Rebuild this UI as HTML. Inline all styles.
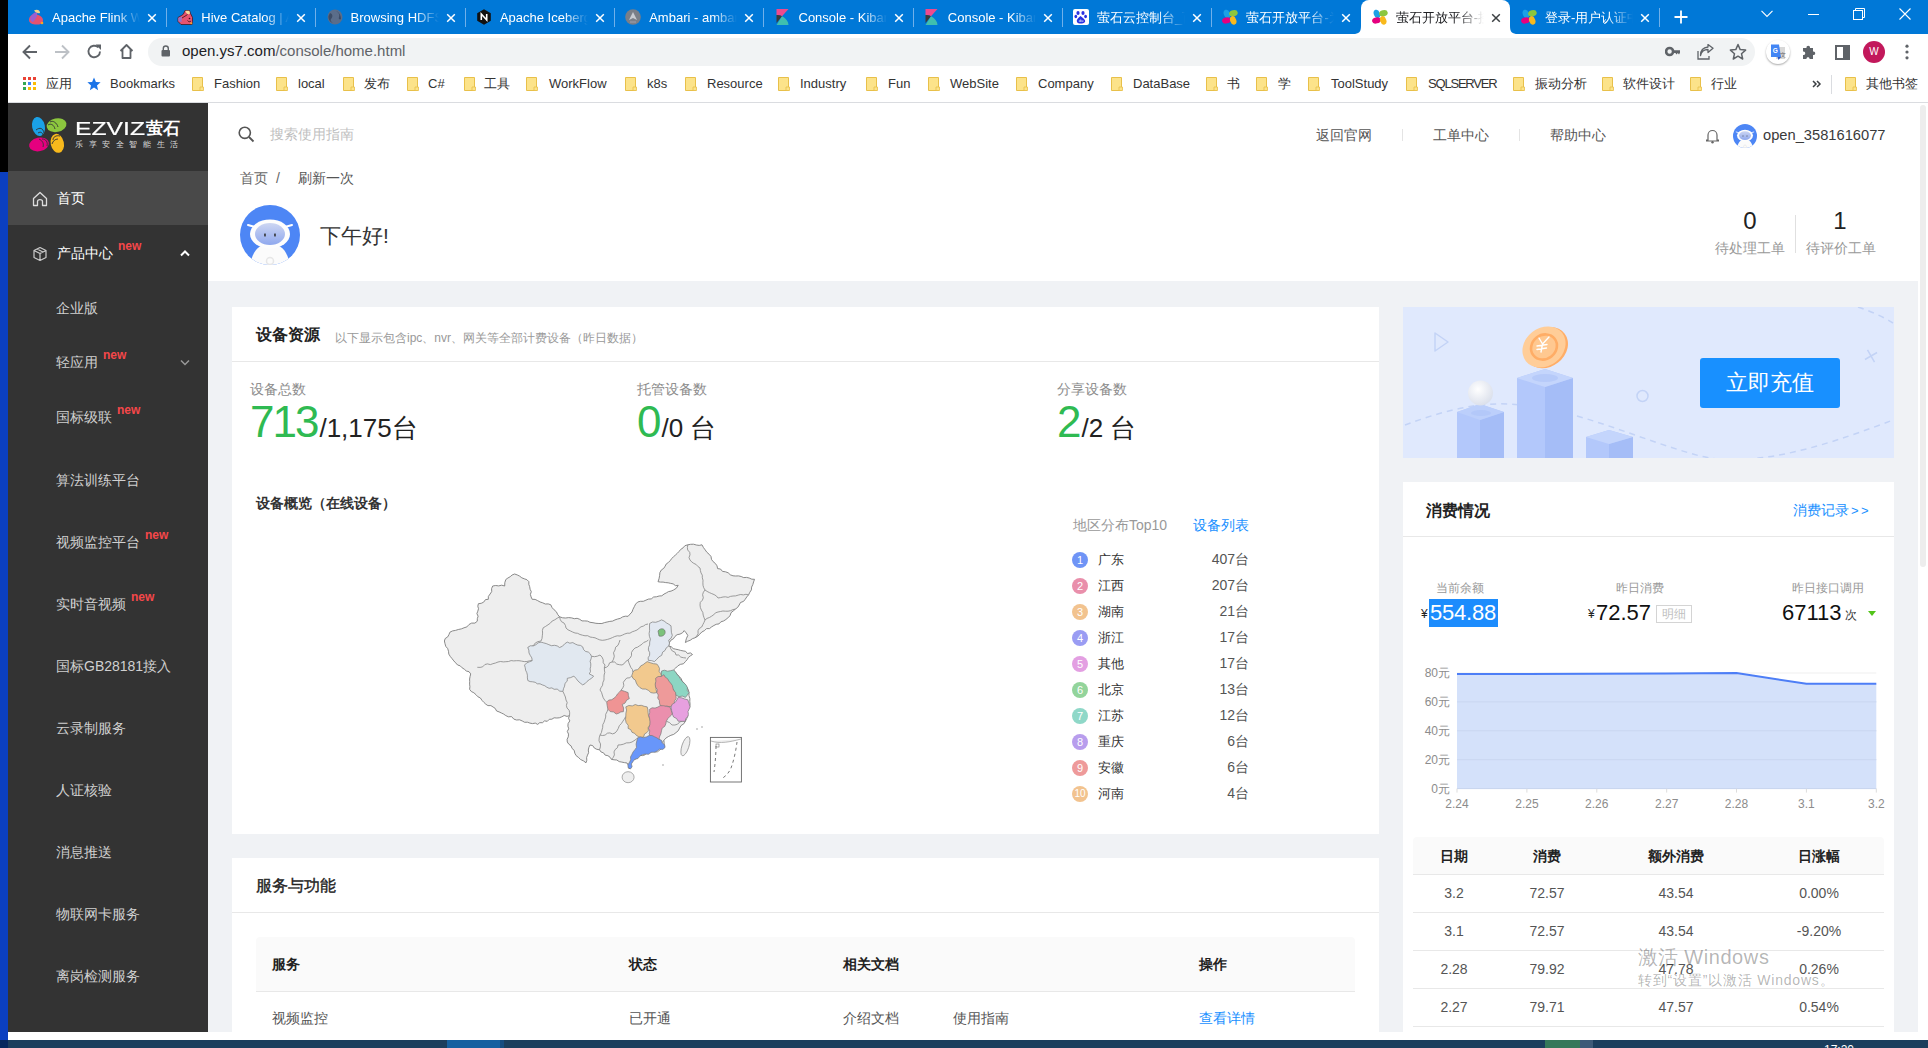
<!DOCTYPE html>
<html><head><meta charset="utf-8"><style>
*{box-sizing:border-box;margin:0;padding:0}
html,body{width:1928px;height:1048px;overflow:hidden;background:#fff;font-family:"Liberation Sans",sans-serif;position:relative}
.a{position:absolute;white-space:nowrap}
.tabt{font-size:13px;line-height:16px;overflow:hidden;-webkit-mask-image:linear-gradient(90deg,#000 72%,transparent 100%);mask-image:linear-gradient(90deg,#000 72%,transparent 100%)}
.bm{position:absolute;top:76px;font-size:13px;color:#333;line-height:16px;white-space:nowrap}
.mi{position:absolute;font-size:14px;line-height:18px;white-space:nowrap}
i{display:inline-block;width:calc(1em + var(--ls,0px));font-style:normal;text-align:left}
.new{font-size:12px;color:#f5474a;font-weight:bold;white-space:nowrap}
</style></head><body>
<div class="a" style="left:0;top:0;width:8px;height:172px;background:#000"></div>
<div class="a" style="left:0;top:172px;width:8px;height:868px;background:#0b3fc0"></div>
<div class="a" style="left:8px;top:0;width:1920px;height:34px;background:#0078d7"></div>
<div class="a" style="left:28.0px;top:9px;width:16px;height:16px"><svg width="16" height="16" viewBox="0 0 16 16"><path d="M1 11 C1 7 4 5 8 5.5 C12 6 15 8 15 11.5 C15 15 11 16 7 15.5 C3 15 1 13.5 1 11Z" fill="#e6526f"/><path d="M2 10 C3 6 6 3 9 3 C10 6 8 10 5 13 C3.5 12.5 2.5 11.5 2 10Z" fill="#9b5fd0"/><path d="M6 1.5 C9 0 12 1 12 4 C10 4.5 8 4 6 1.5Z" fill="#eed28a"/><circle cx="14" cy="14" r="1.3" fill="#f5a623"/></svg></div>
<div class="a tabt" style="left:52.0px;top:10px;width:88px;color:#fff">Apache Flink Web</div>
<div class="a" style="left:147.0px;top:9px;width:10px;height:10px"><svg width="10" height="10" viewBox="0 0 10 10"><path d="M1.2 1.2 L8.8 8.8 M8.8 1.2 L1.2 8.8" stroke="#fff" stroke-width="1.5"/></svg></div>
<div class="a" style="left:166.0px;top:8px;width:1px;height:19px;background:#70b0ea"></div>
<div class="a" style="left:177.3px;top:9px;width:16px;height:16px"><svg width="16" height="16" viewBox="0 0 16 16"><path d="M1 8.5 L4.5 6.5 L6.5 5 L8 1.5 L12.5 1.5 L13.5 4.5 L15.5 8.5 L15.5 12.5 L15 15.5 H4 L1 12.5Z" fill="#e8536f" stroke="#3a1010" stroke-width="0.7"/><path d="M8.3 1.8 H12.3 L13 4.5 L11 5.5 L9 3.5Z" fill="#f7dc9c"/><path d="M1.3 8.7 L5 7.5 L4.5 13 L1.3 12.3Z" fill="#9a70c6"/><path d="M5 9 L9 6.5 L10.5 5.5" stroke="#3a1010" stroke-width="0.8" fill="none"/><path d="M10.5 11.5 C11.5 13 13 13 14 12" stroke="#3a1010" stroke-width="0.8" fill="none"/><circle cx="12.5" cy="9.5" r="0.8" fill="#3a1010"/><circle cx="14.3" cy="14.3" r="1" fill="#f5a623"/></svg></div>
<div class="a tabt" style="left:201.3px;top:10px;width:88px;color:#fff">Hive Catalog | Ap</div>
<div class="a" style="left:296.3px;top:9px;width:10px;height:10px"><svg width="10" height="10" viewBox="0 0 10 10"><path d="M1.2 1.2 L8.8 8.8 M8.8 1.2 L1.2 8.8" stroke="#fff" stroke-width="1.5"/></svg></div>
<div class="a" style="left:315.3px;top:8px;width:1px;height:19px;background:#70b0ea"></div>
<div class="a" style="left:326.6px;top:9px;width:16px;height:16px"><svg width="16" height="16" viewBox="0 0 16 16"><circle cx="8" cy="8" r="7.5" fill="#5a6d8a"/><path d="M3 4 C6 5 6 8 4 10 C3 11 4 13 6 14 C3 13 1 10 1.5 7Z M9 2 C11 3 13 5 12 8 C11 10 13 11 14 10 C14 6 12 3 9 2Z" fill="#3c4c66"/></svg></div>
<div class="a tabt" style="left:350.6px;top:10px;width:88px;color:#fff">Browsing HDFS</div>
<div class="a" style="left:445.6px;top:9px;width:10px;height:10px"><svg width="10" height="10" viewBox="0 0 10 10"><path d="M1.2 1.2 L8.8 8.8 M8.8 1.2 L1.2 8.8" stroke="#fff" stroke-width="1.5"/></svg></div>
<div class="a" style="left:464.6px;top:8px;width:1px;height:19px;background:#70b0ea"></div>
<div class="a" style="left:475.9px;top:9px;width:16px;height:16px"><svg width="16" height="16" viewBox="0 0 16 16"><path d="M8 0.3 L14.8 4.2 V11.8 L8 15.7 L1.2 11.8 V4.2Z" fill="#111"/><path d="M5.3 11 V5 L10.7 11 V5" stroke="#fff" stroke-width="1.6" fill="none" stroke-linejoin="miter"/></svg></div>
<div class="a tabt" style="left:499.9px;top:10px;width:88px;color:#fff">Apache Iceberg</div>
<div class="a" style="left:594.9px;top:9px;width:10px;height:10px"><svg width="10" height="10" viewBox="0 0 10 10"><path d="M1.2 1.2 L8.8 8.8 M8.8 1.2 L1.2 8.8" stroke="#fff" stroke-width="1.5"/></svg></div>
<div class="a" style="left:613.9px;top:8px;width:1px;height:19px;background:#70b0ea"></div>
<div class="a" style="left:625.2px;top:9px;width:16px;height:16px"><svg width="16" height="16" viewBox="0 0 16 16"><circle cx="8" cy="8" r="7.8" fill="#7a7f88"/><path d="M8 3 L12 11 L8 9 L4 11Z" fill="#c9ccd2"/><path d="M5 13 H11" stroke="#aab" stroke-width="0.8"/></svg></div>
<div class="a tabt" style="left:649.2px;top:10px;width:88px;color:#fff">Ambari - ambari</div>
<div class="a" style="left:744.2px;top:9px;width:10px;height:10px"><svg width="10" height="10" viewBox="0 0 10 10"><path d="M1.2 1.2 L8.8 8.8 M8.8 1.2 L1.2 8.8" stroke="#fff" stroke-width="1.5"/></svg></div>
<div class="a" style="left:763.2px;top:8px;width:1px;height:19px;background:#70b0ea"></div>
<div class="a" style="left:774.5px;top:9px;width:16px;height:16px"><svg width="16" height="16" viewBox="0 0 16 16"><path d="M1.5 0 H13.5 L7 7.2 C5 6.2 3.2 6 1.5 6Z" fill="#ee4a8e"/><path d="M1.5 6 C3.2 6 5 6.2 7 7.2 L1.5 14Z" fill="#3a3a3a"/><path d="M1.5 16 L7 7.2 C11 9.5 13.5 12.5 13.5 16Z" fill="#40bfae"/></svg></div>
<div class="a tabt" style="left:798.5px;top:10px;width:88px;color:#fff">Console - Kibana</div>
<div class="a" style="left:893.5px;top:9px;width:10px;height:10px"><svg width="10" height="10" viewBox="0 0 10 10"><path d="M1.2 1.2 L8.8 8.8 M8.8 1.2 L1.2 8.8" stroke="#fff" stroke-width="1.5"/></svg></div>
<div class="a" style="left:912.5px;top:8px;width:1px;height:19px;background:#70b0ea"></div>
<div class="a" style="left:923.8px;top:9px;width:16px;height:16px"><svg width="16" height="16" viewBox="0 0 16 16"><path d="M1.5 0 H13.5 L7 7.2 C5 6.2 3.2 6 1.5 6Z" fill="#ee4a8e"/><path d="M1.5 6 C3.2 6 5 6.2 7 7.2 L1.5 14Z" fill="#3a3a3a"/><path d="M1.5 16 L7 7.2 C11 9.5 13.5 12.5 13.5 16Z" fill="#40bfae"/></svg></div>
<div class="a tabt" style="left:947.8px;top:10px;width:88px;color:#fff">Console - Kibana</div>
<div class="a" style="left:1042.8px;top:9px;width:10px;height:10px"><svg width="10" height="10" viewBox="0 0 10 10"><path d="M1.2 1.2 L8.8 8.8 M8.8 1.2 L1.2 8.8" stroke="#fff" stroke-width="1.5"/></svg></div>
<div class="a" style="left:1061.8px;top:8px;width:1px;height:19px;background:#70b0ea"></div>
<div class="a" style="left:1073.1px;top:9px;width:16px;height:16px"><svg width="16" height="16" viewBox="0 0 16 16"><rect x="0" y="0" width="16" height="16" rx="2" fill="#fff"/><ellipse cx="5" cy="4" rx="1.6" ry="2" fill="#2932e1"/><ellipse cx="10" cy="4" rx="1.6" ry="2" fill="#2932e1"/><ellipse cx="2.8" cy="7.5" rx="1.4" ry="1.8" fill="#2932e1"/><ellipse cx="12.6" cy="7.5" rx="1.4" ry="1.8" fill="#2932e1"/><path d="M7.5 7 C5 9 3 11 4 13 C5 15 10 15 12 13 C13 11 10 9 7.5 7Z" fill="#2932e1"/><text x="8" y="13.2" font-size="4" fill="#fff" text-anchor="middle" font-family="Liberation Sans">du</text></svg></div>
<div class="a tabt" style="left:1097.1px;top:10px;width:88px;color:#fff"><i>萤</i><i>石</i><i>云</i><i>控</i><i>制</i><i>台</i>_<i>百</i><i>度</i></div>
<div class="a" style="left:1192.1px;top:9px;width:10px;height:10px"><svg width="10" height="10" viewBox="0 0 10 10"><path d="M1.2 1.2 L8.8 8.8 M8.8 1.2 L1.2 8.8" stroke="#fff" stroke-width="1.5"/></svg></div>
<div class="a" style="left:1211.1px;top:8px;width:1px;height:19px;background:#70b0ea"></div>
<div class="a" style="left:1222.4px;top:9px;width:16px;height:16px"><svg width="16" height="16" viewBox="-8 -8 16 16"><g transform="translate(0,0) scale(0.95)">
<ellipse cx="-3.3" cy="-3.2" rx="3.2" ry="4.6" fill="#1ba1e6" transform="rotate(-20 -3.3 -3.2)"/>
<ellipse cx="3.6" cy="-3.9" rx="4.6" ry="3.2" fill="#8cc63e" transform="rotate(-15 3.6 -3.9)"/>
<ellipse cx="-3.8" cy="3.6" rx="4.6" ry="3.2" fill="#e5007f" transform="rotate(-15 -3.8 3.6)"/>
<ellipse cx="3.4" cy="3.6" rx="3.2" ry="4.6" fill="#f8b91c" transform="rotate(-20 3.4 3.6)"/>
</g></svg></div>
<div class="a tabt" style="left:1246.4px;top:10px;width:88px;color:#fff"><i>萤</i><i>石</i><i>开</i><i>放</i><i>平</i><i>台</i>-<i>为</i></div>
<div class="a" style="left:1341.4px;top:9px;width:10px;height:10px"><svg width="10" height="10" viewBox="0 0 10 10"><path d="M1.2 1.2 L8.8 8.8 M8.8 1.2 L1.2 8.8" stroke="#fff" stroke-width="1.5"/></svg></div>
<div class="a" style="left:1360.7px;top:0px;width:149.3px;height:34px;background:#fff;border-radius:8px 8px 0 0"></div>
<svg class="a" style="left:1352.7px;top:26px" width="8" height="8"><path d="M0 8 C6 8 8 6 8 0 L8 8Z" fill="#fff"/></svg>
<svg class="a" style="left:1510.0px;top:26px" width="8" height="8"><path d="M8 8 C2 8 0 6 0 0 L0 8Z" fill="#fff"/></svg>
<div class="a" style="left:1371.7px;top:9px;width:16px;height:16px"><svg width="16" height="16" viewBox="-8 -8 16 16"><g transform="translate(0,0) scale(0.95)">
<ellipse cx="-3.3" cy="-3.2" rx="3.2" ry="4.6" fill="#1ba1e6" transform="rotate(-20 -3.3 -3.2)"/>
<ellipse cx="3.6" cy="-3.9" rx="4.6" ry="3.2" fill="#8cc63e" transform="rotate(-15 3.6 -3.9)"/>
<ellipse cx="-3.8" cy="3.6" rx="4.6" ry="3.2" fill="#e5007f" transform="rotate(-15 -3.8 3.6)"/>
<ellipse cx="3.4" cy="3.6" rx="3.2" ry="4.6" fill="#f8b91c" transform="rotate(-20 3.4 3.6)"/>
</g></svg></div>
<div class="a tabt" style="left:1395.7px;top:10px;width:88px;color:#202124"><i>萤</i><i>石</i><i>开</i><i>放</i><i>平</i><i>台</i>-<i>接</i></div>
<div class="a" style="left:1490.7px;top:9px;width:10px;height:10px"><svg width="10" height="10" viewBox="0 0 10 10"><path d="M1.2 1.2 L8.8 8.8 M8.8 1.2 L1.2 8.8" stroke="#3c4043" stroke-width="1.5"/></svg></div>
<div class="a" style="left:1521.0px;top:9px;width:16px;height:16px"><svg width="16" height="16" viewBox="-8 -8 16 16"><g transform="translate(0,0) scale(0.95)">
<ellipse cx="-3.3" cy="-3.2" rx="3.2" ry="4.6" fill="#1ba1e6" transform="rotate(-20 -3.3 -3.2)"/>
<ellipse cx="3.6" cy="-3.9" rx="4.6" ry="3.2" fill="#8cc63e" transform="rotate(-15 3.6 -3.9)"/>
<ellipse cx="-3.8" cy="3.6" rx="4.6" ry="3.2" fill="#e5007f" transform="rotate(-15 -3.8 3.6)"/>
<ellipse cx="3.4" cy="3.6" rx="3.2" ry="4.6" fill="#f8b91c" transform="rotate(-20 3.4 3.6)"/>
</g></svg></div>
<div class="a tabt" style="left:1545.0px;top:10px;width:88px;color:#fff"><i>登</i><i>录</i>-<i>用</i><i>户</i><i>认</i><i>证</i><i>中</i></div>
<div class="a" style="left:1640.0px;top:9px;width:10px;height:10px"><svg width="10" height="10" viewBox="0 0 10 10"><path d="M1.2 1.2 L8.8 8.8 M8.8 1.2 L1.2 8.8" stroke="#fff" stroke-width="1.5"/></svg></div>
<div class="a" style="left:1659.0px;top:8px;width:1px;height:19px;background:#70b0ea"></div>
<svg class="a" style="left:1674px;top:10px" width="14" height="14"><path d="M7 0.5 V13.5 M0.5 7 H13.5" stroke="#fff" stroke-width="1.8"/></svg>
<svg class="a" style="left:1761px;top:10px" width="12" height="8"><path d="M0.5 0.8 L6 6.5 L11.5 0.8" stroke="#fff" stroke-width="1.1" fill="none"/></svg>
<div class="a" style="left:1808px;top:14px;width:11px;height:1px;background:#fff"></div>
<svg class="a" style="left:1853px;top:8px" width="12" height="12"><rect x="0.5" y="2.5" width="9" height="9" stroke="#fff" fill="none"/><path d="M2.5 2.5 V0.5 H11.5 V9.5 H9.5" stroke="#fff" fill="none"/></svg>
<svg class="a" style="left:1899px;top:8px" width="12" height="12"><path d="M0.5 0.5 L11.5 11.5 M11.5 0.5 L0.5 11.5" stroke="#fff" stroke-width="1.1"/></svg>
<div class="a" style="left:8px;top:34px;width:1920px;height:68px;background:#fff"></div>
<div class="a" style="left:8px;top:102px;width:1920px;height:1px;background:#dadce0"></div>
<div class="a" style="left:148px;top:38px;width:1607px;height:28px;border-radius:14px;background:#f1f3f4"></div>
<svg class="a" style="left:22px;top:44px" width="16" height="16"><path d="M15 8 H2 M8 1.5 L1.5 8 L8 14.5" stroke="#5f6368" stroke-width="1.9" fill="none"/></svg>
<svg class="a" style="left:54px;top:44px" width="16" height="16"><path d="M1 8 H14 M8 1.5 L14.5 8 L8 14.5" stroke="#bdc1c6" stroke-width="1.9" fill="none"/></svg>
<svg class="a" style="left:86px;top:43px" width="17" height="17"><path d="M14 8.5 A5.8 5.8 0 1 1 12.3 4.4" stroke="#5f6368" stroke-width="1.9" fill="none"/><path d="M9.5 1.5 H15 V7 Z" fill="#5f6368"/></svg>
<svg class="a" style="left:118px;top:43px" width="17" height="17"><path d="M2.5 8 L8.5 2 L14.5 8 M4.5 6.5 V15 H12.5 V6.5" stroke="#5f6368" stroke-width="1.8" fill="none" stroke-linejoin="round"/></svg>
<svg class="a" style="left:161px;top:45px" width="10" height="12"><rect x="0.5" y="5" width="8.5" height="6.5" rx="1" fill="#5f6368"/><path d="M2.3 5 V3.5 A2.5 2.5 0 0 1 7.3 3.5 V5" stroke="#5f6368" stroke-width="1.4" fill="none"/></svg>
<div class="a" style="left:182px;top:42px;font-size:15px;line-height:18px;color:#202124">open.ys7.com<span style="color:#5f6368">/console/home.html</span></div>
<svg class="a" style="left:1665px;top:45px" width="16" height="14"><circle cx="4.6" cy="6.5" r="3.5" stroke="#5f6368" stroke-width="2.6" fill="none"/><path d="M7.5 5.2 H15 V7.8 L14 9.5 L12.8 8 L11.6 9.5 L10.4 8 H7.5Z" fill="#5f6368"/></svg>
<svg class="a" style="left:1697px;top:44px" width="17" height="16"><path d="M1 7 V15 H12 V12" stroke="#5f6368" stroke-width="1.3" fill="none"/><path d="M3.5 11.5 C4.5 7 8 5.5 11 5.5 V8.5 L16 4.2 L11 0.5 V3 C6 3.5 3.5 7 3.5 11.5Z" stroke="#5f6368" stroke-width="1.3" fill="none" stroke-linejoin="round"/></svg>
<svg class="a" style="left:1729px;top:43px" width="18" height="18"><path d="M9 1.5 L11.2 6.6 L16.6 7.1 L12.5 10.7 L13.7 16 L9 13.2 L4.3 16 L5.5 10.7 L1.4 7.1 L6.8 6.6Z" stroke="#5f6368" stroke-width="1.5" fill="none" stroke-linejoin="round"/></svg>
<div class="a" style="left:1766px;top:40px;width:24px;height:24px;border-radius:12px;background:#fff;box-shadow:0 1px 2px rgba(0,0,0,.35)"></div>
<svg class="a" style="left:1770px;top:44px" width="16" height="16"><rect x="6" y="3" width="9" height="12" fill="#d8d8d8"/><path d="M1 0.5 H9 L11 13 H1Z" fill="#4285f4"/><path d="M7.5 13 L11 13 L8.5 16Z" fill="#2a56c6"/><text x="5.2" y="8.5" font-size="6.5" font-family="Liberation Sans" font-weight="bold" fill="#fff" text-anchor="middle">G</text><text x="12.5" y="12.8" font-size="5.5" font-family="Liberation Sans" fill="#666" text-anchor="middle">文</text></svg>
<svg class="a" style="left:1801px;top:44px" width="16" height="16"><path d="M2 4 H5.5 C5 1 9.5 1 9 4 H12 V7.5 C15 7 15 11.5 12 11 V15 H8.5 C9 12.5 5 12.5 5.5 15 H2 V11 C5 11.5 5 7 2 7.5Z" fill="#5f6368"/></svg>
<svg class="a" style="left:1835px;top:45px" width="15" height="15"><rect x="1" y="1" width="13" height="13" stroke="#5f6368" stroke-width="2" fill="none"/><rect x="8" y="1" width="6" height="13" fill="#5f6368"/></svg>
<div class="a" style="left:1863px;top:41px;width:22px;height:22px;border-radius:11px;background:#c2185b;color:#fff;font-size:10px;line-height:22px;text-align:center">W</div>
<svg class="a" style="left:1905px;top:44px" width="4" height="16"><circle cx="2" cy="2.2" r="1.6" fill="#5f6368"/><circle cx="2" cy="8" r="1.6" fill="#5f6368"/><circle cx="2" cy="13.8" r="1.6" fill="#5f6368"/></svg>
<div class="a" style="left:23px;top:77px;width:3px;height:3px;background:#ea4335"></div>
<div class="a" style="left:28px;top:77px;width:3px;height:3px;background:#ea4335"></div>
<div class="a" style="left:33px;top:77px;width:3px;height:3px;background:#ea4335"></div>
<div class="a" style="left:23px;top:82px;width:3px;height:3px;background:#34a853"></div>
<div class="a" style="left:28px;top:82px;width:3px;height:3px;background:#4285f4"></div>
<div class="a" style="left:33px;top:82px;width:3px;height:3px;background:#fbbc05"></div>
<div class="a" style="left:23px;top:87px;width:3px;height:3px;background:#34a853"></div>
<div class="a" style="left:28px;top:87px;width:3px;height:3px;background:#fbbc05"></div>
<div class="a" style="left:33px;top:87px;width:3px;height:3px;background:#fbbc05"></div>
<svg class="a" style="left:87px;top:77px" width="14" height="14"><path d="M7 0.5 L8.9 5 L13.6 5.3 L10 8.4 L11.1 13.2 L7 10.6 L2.9 13.2 L4 8.4 L0.4 5.3 L5.1 5Z" fill="#1a73e8"/></svg>
<div class="bm" style="left:46px"><i>应</i><i>用</i></div>
<div class="bm" style="left:110px">Bookmarks</div>
<svg class="a" style="left:192px;top:77px" width="12" height="14"><path d="M0.5 0.5 H10.5 V13.5 H0.5Z" fill="#fce38a" stroke="#e8c04a"/><path d="M8 10 H11.5 V13.5 H8Z" fill="#fce38a" stroke="#e8c04a" stroke-width="0.8"/></svg>
<div class="bm" style="left:214px">Fashion</div>
<svg class="a" style="left:276px;top:77px" width="12" height="14"><path d="M0.5 0.5 H10.5 V13.5 H0.5Z" fill="#fce38a" stroke="#e8c04a"/><path d="M8 10 H11.5 V13.5 H8Z" fill="#fce38a" stroke="#e8c04a" stroke-width="0.8"/></svg>
<div class="bm" style="left:298px">local</div>
<svg class="a" style="left:343px;top:77px" width="12" height="14"><path d="M0.5 0.5 H10.5 V13.5 H0.5Z" fill="#fce38a" stroke="#e8c04a"/><path d="M8 10 H11.5 V13.5 H8Z" fill="#fce38a" stroke="#e8c04a" stroke-width="0.8"/></svg>
<div class="bm" style="left:364px"><i>发</i><i>布</i></div>
<svg class="a" style="left:407px;top:77px" width="12" height="14"><path d="M0.5 0.5 H10.5 V13.5 H0.5Z" fill="#fce38a" stroke="#e8c04a"/><path d="M8 10 H11.5 V13.5 H8Z" fill="#fce38a" stroke="#e8c04a" stroke-width="0.8"/></svg>
<div class="bm" style="left:428px">C#</div>
<svg class="a" style="left:464px;top:77px" width="12" height="14"><path d="M0.5 0.5 H10.5 V13.5 H0.5Z" fill="#fce38a" stroke="#e8c04a"/><path d="M8 10 H11.5 V13.5 H8Z" fill="#fce38a" stroke="#e8c04a" stroke-width="0.8"/></svg>
<div class="bm" style="left:484px"><i>工</i><i>具</i></div>
<svg class="a" style="left:526px;top:77px" width="12" height="14"><path d="M0.5 0.5 H10.5 V13.5 H0.5Z" fill="#fce38a" stroke="#e8c04a"/><path d="M8 10 H11.5 V13.5 H8Z" fill="#fce38a" stroke="#e8c04a" stroke-width="0.8"/></svg>
<div class="bm" style="left:549px">WorkFlow</div>
<svg class="a" style="left:625px;top:77px" width="12" height="14"><path d="M0.5 0.5 H10.5 V13.5 H0.5Z" fill="#fce38a" stroke="#e8c04a"/><path d="M8 10 H11.5 V13.5 H8Z" fill="#fce38a" stroke="#e8c04a" stroke-width="0.8"/></svg>
<div class="bm" style="left:647px">k8s</div>
<svg class="a" style="left:685px;top:77px" width="12" height="14"><path d="M0.5 0.5 H10.5 V13.5 H0.5Z" fill="#fce38a" stroke="#e8c04a"/><path d="M8 10 H11.5 V13.5 H8Z" fill="#fce38a" stroke="#e8c04a" stroke-width="0.8"/></svg>
<div class="bm" style="left:707px">Resource</div>
<svg class="a" style="left:778px;top:77px" width="12" height="14"><path d="M0.5 0.5 H10.5 V13.5 H0.5Z" fill="#fce38a" stroke="#e8c04a"/><path d="M8 10 H11.5 V13.5 H8Z" fill="#fce38a" stroke="#e8c04a" stroke-width="0.8"/></svg>
<div class="bm" style="left:800px">Industry</div>
<svg class="a" style="left:866px;top:77px" width="12" height="14"><path d="M0.5 0.5 H10.5 V13.5 H0.5Z" fill="#fce38a" stroke="#e8c04a"/><path d="M8 10 H11.5 V13.5 H8Z" fill="#fce38a" stroke="#e8c04a" stroke-width="0.8"/></svg>
<div class="bm" style="left:888px">Fun</div>
<svg class="a" style="left:928px;top:77px" width="12" height="14"><path d="M0.5 0.5 H10.5 V13.5 H0.5Z" fill="#fce38a" stroke="#e8c04a"/><path d="M8 10 H11.5 V13.5 H8Z" fill="#fce38a" stroke="#e8c04a" stroke-width="0.8"/></svg>
<div class="bm" style="left:950px">WebSite</div>
<svg class="a" style="left:1016px;top:77px" width="12" height="14"><path d="M0.5 0.5 H10.5 V13.5 H0.5Z" fill="#fce38a" stroke="#e8c04a"/><path d="M8 10 H11.5 V13.5 H8Z" fill="#fce38a" stroke="#e8c04a" stroke-width="0.8"/></svg>
<div class="bm" style="left:1038px">Company</div>
<svg class="a" style="left:1111px;top:77px" width="12" height="14"><path d="M0.5 0.5 H10.5 V13.5 H0.5Z" fill="#fce38a" stroke="#e8c04a"/><path d="M8 10 H11.5 V13.5 H8Z" fill="#fce38a" stroke="#e8c04a" stroke-width="0.8"/></svg>
<div class="bm" style="left:1133px">DataBase</div>
<svg class="a" style="left:1206px;top:77px" width="12" height="14"><path d="M0.5 0.5 H10.5 V13.5 H0.5Z" fill="#fce38a" stroke="#e8c04a"/><path d="M8 10 H11.5 V13.5 H8Z" fill="#fce38a" stroke="#e8c04a" stroke-width="0.8"/></svg>
<div class="bm" style="left:1227px"><i>书</i></div>
<svg class="a" style="left:1256px;top:77px" width="12" height="14"><path d="M0.5 0.5 H10.5 V13.5 H0.5Z" fill="#fce38a" stroke="#e8c04a"/><path d="M8 10 H11.5 V13.5 H8Z" fill="#fce38a" stroke="#e8c04a" stroke-width="0.8"/></svg>
<div class="bm" style="left:1278px"><i>学</i></div>
<svg class="a" style="left:1308px;top:77px" width="12" height="14"><path d="M0.5 0.5 H10.5 V13.5 H0.5Z" fill="#fce38a" stroke="#e8c04a"/><path d="M8 10 H11.5 V13.5 H8Z" fill="#fce38a" stroke="#e8c04a" stroke-width="0.8"/></svg>
<div class="bm" style="left:1331px">ToolStudy</div>
<svg class="a" style="left:1406px;top:77px" width="12" height="14"><path d="M0.5 0.5 H10.5 V13.5 H0.5Z" fill="#fce38a" stroke="#e8c04a"/><path d="M8 10 H11.5 V13.5 H8Z" fill="#fce38a" stroke="#e8c04a" stroke-width="0.8"/></svg>
<div class="bm" style="left:1428px;letter-spacing:-1.2px">SQLSERVER</div>
<svg class="a" style="left:1513px;top:77px" width="12" height="14"><path d="M0.5 0.5 H10.5 V13.5 H0.5Z" fill="#fce38a" stroke="#e8c04a"/><path d="M8 10 H11.5 V13.5 H8Z" fill="#fce38a" stroke="#e8c04a" stroke-width="0.8"/></svg>
<div class="bm" style="left:1535px"><i>振</i><i>动</i><i>分</i><i>析</i></div>
<svg class="a" style="left:1602px;top:77px" width="12" height="14"><path d="M0.5 0.5 H10.5 V13.5 H0.5Z" fill="#fce38a" stroke="#e8c04a"/><path d="M8 10 H11.5 V13.5 H8Z" fill="#fce38a" stroke="#e8c04a" stroke-width="0.8"/></svg>
<div class="bm" style="left:1623px"><i>软</i><i>件</i><i>设</i><i>计</i></div>
<svg class="a" style="left:1690px;top:77px" width="12" height="14"><path d="M0.5 0.5 H10.5 V13.5 H0.5Z" fill="#fce38a" stroke="#e8c04a"/><path d="M8 10 H11.5 V13.5 H8Z" fill="#fce38a" stroke="#e8c04a" stroke-width="0.8"/></svg>
<div class="bm" style="left:1711px"><i>行</i><i>业</i></div>
<svg class="a" style="left:1845px;top:77px" width="12" height="14"><path d="M0.5 0.5 H10.5 V13.5 H0.5Z" fill="#fce38a" stroke="#e8c04a"/><path d="M8 10 H11.5 V13.5 H8Z" fill="#fce38a" stroke="#e8c04a" stroke-width="0.8"/></svg>
<div class="bm" style="left:1866px"><i>其</i><i>他</i><i>书</i><i>签</i></div>
<svg class="a" style="left:1812px;top:80px" width="10" height="8"><path d="M1 1 L4 4 L1 7 M5 1 L8 4 L5 7" stroke="#3c4043" stroke-width="1.5" fill="none"/></svg>
<div class="a" style="left:1831px;top:75px;width:1px;height:19px;background:#dadce0"></div>
<div class="a" style="left:208px;top:103px;width:1710px;height:178px;background:#fff"></div>
<svg class="a" style="left:238px;top:126px" width="17" height="17"><circle cx="6.8" cy="6.8" r="5.6" stroke="#555" stroke-width="1.6" fill="none"/><path d="M11 11 L15.5 15.5" stroke="#555" stroke-width="1.8"/></svg>
<div class="a" style="left:270px;top:126px;font-size:14px;line-height:16px;color:#bfbfbf"><i>搜</i><i>索</i><i>使</i><i>用</i><i>指</i><i>南</i></div>
<div class="a" style="left:1316px;top:127px;font-size:14px;line-height:16px;color:#555"><i>返</i><i>回</i><i>官</i><i>网</i></div>
<div class="a" style="left:1433px;top:127px;font-size:14px;line-height:16px;color:#555"><i>工</i><i>单</i><i>中</i><i>心</i></div>
<div class="a" style="left:1550px;top:127px;font-size:14px;line-height:16px;color:#555"><i>帮</i><i>助</i><i>中</i><i>心</i></div>
<div class="a" style="left:1402px;top:129px;width:1px;height:12px;background:#e4e4e4"></div>
<div class="a" style="left:1519px;top:129px;width:1px;height:12px;background:#e4e4e4"></div>
<svg class="a" style="left:1706px;top:128px" width="13" height="16"><path d="M2 12 V7 A4.5 4.5 0 0 1 11 7 V12 H12.5 V13 H0.5 V12Z" stroke="#666" stroke-width="1.2" fill="none" stroke-linejoin="round"/><circle cx="6.5" cy="14.3" r="1.2" fill="#666"/></svg>
<svg class="a" style="left:1733px;top:124px" width="24" height="24" viewBox="-30 -30 60 60">
<defs><clipPath id="rc12"><circle cx="0" cy="0" r="30"/></clipPath>
<linearGradient id="fg12" x1="0" y1="0" x2="0" y2="1"><stop offset="0" stop-color="#cdd6f2"/><stop offset="1" stop-color="#8fa8ee"/></linearGradient></defs>
<circle cx="0" cy="0" r="30" fill="#4d86f5"/>
<g clip-path="url(#rc12)">
<path d="M-20 30 C-17 14 -10 9 0 9 C10 9 17 14 20 30Z" fill="#fbfbfb"/>
<ellipse cx="0" cy="-1" rx="20" ry="14.5" fill="#fdfdfd"/>
<ellipse cx="0" cy="-1" rx="15" ry="11" fill="url(#fg12)"/>
<path d="M-22 -10 L-15 -8 M22 -10 L15 -8" stroke="#fff" stroke-width="2" stroke-linecap="round"/>
<ellipse cx="-5" cy="0" rx="0.9" ry="1.7" fill="#333"/><ellipse cx="5" cy="0" rx="0.9" ry="1.7" fill="#333"/>
<circle cx="0" cy="26" r="3.5" fill="none" stroke="#e6e6e6" stroke-width="1.5"/>
</g></svg>
<div class="a" style="left:1763px;top:126px;font-size:14.7px;line-height:18px;color:#3a3a3a">open_3581616077</div>
<div class="a" style="left:240px;top:170px;font-size:14px;line-height:16px;color:#666"><i>首</i><i>页</i></div>
<div class="a" style="left:276px;top:170px;font-size:14px;line-height:16px;color:#666">/</div>
<div class="a" style="left:298px;top:170px;font-size:14px;line-height:16px;color:#555"><i>刷</i><i>新</i><i>一</i><i>次</i></div>
<svg class="a" style="left:240px;top:205px" width="60" height="60" viewBox="-30 -30 60 60">
<defs><clipPath id="rc30"><circle cx="0" cy="0" r="30"/></clipPath>
<linearGradient id="fg30" x1="0" y1="0" x2="0" y2="1"><stop offset="0" stop-color="#cdd6f2"/><stop offset="1" stop-color="#8fa8ee"/></linearGradient></defs>
<circle cx="0" cy="0" r="30" fill="#4d86f5"/>
<g clip-path="url(#rc30)">
<path d="M-20 30 C-17 14 -10 9 0 9 C10 9 17 14 20 30Z" fill="#fbfbfb"/>
<ellipse cx="0" cy="-1" rx="20" ry="14.5" fill="#fdfdfd"/>
<ellipse cx="0" cy="-1" rx="15" ry="11" fill="url(#fg30)"/>
<path d="M-22 -10 L-15 -8 M22 -10 L15 -8" stroke="#fff" stroke-width="2" stroke-linecap="round"/>
<ellipse cx="-5" cy="0" rx="0.9" ry="1.7" fill="#333"/><ellipse cx="5" cy="0" rx="0.9" ry="1.7" fill="#333"/>
<circle cx="0" cy="26" r="3.5" fill="none" stroke="#e6e6e6" stroke-width="1.5"/>
</g></svg>
<div class="a" style="left:320px;top:224px;font-size:21px;line-height:24px;color:#333"><i>下</i><i>午</i><i>好</i></div>
<div class="a" style="left:383px;top:224px;font-size:21px;line-height:24px;color:#333">!</div>
<div class="a" style="left:1720px;top:207px;width:60px;text-align:center;font-size:24px;line-height:28px;color:#222">0</div>
<div class="a" style="left:1810px;top:207px;width:60px;text-align:center;font-size:24px;line-height:28px;color:#222">1</div>
<div class="a" style="left:1715px;top:240px;font-size:14px;line-height:16px;color:#999"><i>待</i><i>处</i><i>理</i><i>工</i><i>单</i></div>
<div class="a" style="left:1806px;top:240px;font-size:14px;line-height:16px;color:#999"><i>待</i><i>评</i><i>价</i><i>工</i><i>单</i></div>
<div class="a" style="left:1795px;top:215px;width:1px;height:38px;background:#e0e0e0"></div>
<div class="a" style="left:208px;top:281px;width:1710px;height:751px;background:#f0f2f5"></div>
<div class="a" style="left:1918px;top:103px;width:10px;height:929px;background:#fff"></div>
<div class="a" style="left:1920px;top:105px;width:6px;height:462px;background:#ededed;border-radius:3px"></div>
<div class="a" style="left:8px;top:103px;width:200px;height:929px;background:#333"></div>
<div class="a" style="left:8px;top:171px;width:200px;height:54px;background:#494949"></div>
<svg class="a" style="left:24px;top:108px" width="50" height="50" viewBox="24 108 50 50">
<ellipse cx="38.5" cy="126.5" rx="6.4" ry="9.6" fill="#1ba1e6" transform="rotate(-12 38.5 126.5)"/>
<ellipse cx="56.6" cy="125.2" rx="10" ry="6.8" fill="#8cc63e" transform="rotate(-12 56.6 125.2)"/>
<ellipse cx="39" cy="144.4" rx="10" ry="6.8" fill="#e5007f" transform="rotate(-12 39 144.4)"/>
<ellipse cx="57.3" cy="143.3" rx="6.6" ry="9.6" fill="#f8b91c" transform="rotate(-12 57.3 143.3)"/>
<path d="M36 130 C40 127 43 128 44 133 M38 133 C41 131 43 133 43 136" stroke="#333" stroke-width="0.9" fill="none"/>
<path d="M50 122 C53 120 57 123 58 127 M48 125 C51 123 54 125 55 129" stroke="#333" stroke-width="0.9" fill="none"/>
<path d="M42 139 C46 139 48 142 47 146 M39 139 C43 141 44 144 43 147" stroke="#333" stroke-width="0.9" fill="none"/>
<path d="M53 140 C53 137 56 135 60 136 M52 144 C53 141 55 139 58 139" stroke="#333" stroke-width="0.9" fill="none"/>
</svg>
<div class="a" style="left:75px;top:119px;font-size:19px;line-height:20px;color:#fff;letter-spacing:0px;transform:scaleX(1.3);transform-origin:0 0;-webkit-text-stroke:0.2px #fff">EZVIZ</div>
<div class="a" style="left:146px;top:120px;font-size:17px;line-height:18px;color:#fff;font-weight:bold"><i>萤</i><i>石</i></div>
<div class="a" style="left:75px;top:140px;font-size:8px;line-height:10px;color:#ddd;letter-spacing:5.6px;--ls:5.6px"><i>乐</i><i>享</i><i>安</i><i>全</i><i>智</i><i>能</i><i>生</i><i>活</i></div>
<div class="mi" style="left:57px;top:189px;color:#fff"><i>首</i><i>页</i></div>
<svg class="a" style="left:32px;top:191px" width="16" height="16"><path d="M1.5 7.5 L8 1.5 L14.5 7.5 V14.5 H10.5 V10.5 C10.5 8 5.5 8 5.5 10.5 V14.5 H1.5Z" stroke="#ddd" stroke-width="1.3" fill="none" stroke-linejoin="round"/></svg>
<div class="mi" style="left:57px;top:244px;color:#fff"><i>产</i><i>品</i><i>中</i><i>心</i></div>
<div class="a new" style="left:118px;top:240px;line-height:12px">new</div>
<svg class="a" style="left:32px;top:246px" width="16" height="16"><path d="M8 1.5 L14 4.5 V11.5 L8 14.5 L2 11.5 V4.5Z M2 4.5 L8 7.5 L14 4.5 M8 7.5 V14.5 M5 3 L11 6" stroke="#ccc" stroke-width="1.2" fill="none" stroke-linejoin="round"/></svg>
<svg class="a" style="left:180px;top:250px" width="10" height="7"><path d="M1 5.5 L5 1.5 L9 5.5" stroke="#fff" stroke-width="2" fill="none"/></svg>
<div class="mi" style="left:56px;top:299px;color:#d0d0d0"><i>企</i><i>业</i><i>版</i></div>
<div class="mi" style="left:56px;top:353px;color:#d0d0d0"><i>轻</i><i>应</i><i>用</i></div>
<div class="a new" style="left:103px;top:349px;line-height:12px">new</div>
<svg class="a" style="left:180px;top:359px" width="10" height="7"><path d="M1 1.5 L5 5.5 L9 1.5" stroke="#999" stroke-width="1.5" fill="none"/></svg>
<div class="mi" style="left:56px;top:408px;color:#d0d0d0"><i>国</i><i>标</i><i>级</i><i>联</i></div>
<div class="a new" style="left:117px;top:404px;line-height:12px">new</div>
<div class="mi" style="left:56px;top:471px;color:#d0d0d0"><i>算</i><i>法</i><i>训</i><i>练</i><i>平</i><i>台</i></div>
<div class="mi" style="left:56px;top:533px;color:#d0d0d0"><i>视</i><i>频</i><i>监</i><i>控</i><i>平</i><i>台</i></div>
<div class="a new" style="left:145px;top:529px;line-height:12px">new</div>
<div class="mi" style="left:56px;top:595px;color:#d0d0d0"><i>实</i><i>时</i><i>音</i><i>视</i><i>频</i></div>
<div class="a new" style="left:131px;top:591px;line-height:12px">new</div>
<div class="mi" style="left:56px;top:657px;color:#d0d0d0"><i>国</i><i>标</i>GB28181<i>接</i><i>入</i></div>
<div class="mi" style="left:56px;top:719px;color:#d0d0d0"><i>云</i><i>录</i><i>制</i><i>服</i><i>务</i></div>
<div class="mi" style="left:56px;top:781px;color:#d0d0d0"><i>人</i><i>证</i><i>核</i><i>验</i></div>
<div class="mi" style="left:56px;top:843px;color:#d0d0d0"><i>消</i><i>息</i><i>推</i><i>送</i></div>
<div class="mi" style="left:56px;top:905px;color:#d0d0d0"><i>物</i><i>联</i><i>网</i><i>卡</i><i>服</i><i>务</i></div>
<div class="mi" style="left:56px;top:967px;color:#d0d0d0"><i>离</i><i>岗</i><i>检</i><i>测</i><i>服</i><i>务</i></div>
<div class="a" style="left:232px;top:307px;width:1147px;height:527px;background:#fff"></div>
<div class="a" style="left:256px;top:326px;font-size:16px;line-height:18px;color:#222;font-weight:bold"><i>设</i><i>备</i><i>资</i><i>源</i></div>
<div class="a" style="left:335px;top:331px;font-size:12px;line-height:14px;color:#999"><i>以</i><i>下</i><i>显</i><i>示</i><i>包</i><i>含</i>ipc<i>、</i>nvr<i>、</i><i>网</i><i>关</i><i>等</i><i>全</i><i>部</i><i>计</i><i>费</i><i>设</i><i>备</i><i>（</i><i>昨</i><i>日</i><i>数</i><i>据</i><i>）</i></div>
<div class="a" style="left:232px;top:361px;width:1147px;height:1px;background:#e8e8e8"></div>
<div class="a" style="left:250px;top:381px;font-size:14px;line-height:16px;color:#8c8c8c"><i>设</i><i>备</i><i>总</i><i>数</i></div>
<div class="a" style="left:250px;top:400px;line-height:44px;color:#222"><span style="font-size:44px;color:#2fba52;letter-spacing:-2px">713</span><span style="font-size:26px;margin-left:2px">/1,175<i>台</i></span></div>
<div class="a" style="left:637px;top:381px;font-size:14px;line-height:16px;color:#8c8c8c"><i>托</i><i>管</i><i>设</i><i>备</i><i>数</i></div>
<div class="a" style="left:637px;top:400px;line-height:44px;color:#222"><span style="font-size:44px;color:#2fba52;letter-spacing:-2px">0</span><span style="font-size:26px;margin-left:2px">/0 <i>台</i></span></div>
<div class="a" style="left:1057px;top:381px;font-size:14px;line-height:16px;color:#8c8c8c"><i>分</i><i>享</i><i>设</i><i>备</i><i>数</i></div>
<div class="a" style="left:1057px;top:400px;line-height:44px;color:#222"><span style="font-size:44px;color:#2fba52;letter-spacing:-2px">2</span><span style="font-size:26px;margin-left:2px">/2 <i>台</i></span></div>
<div class="a" style="left:256px;top:495px;font-size:14px;line-height:16px;color:#333;font-weight:bold"><i>设</i><i>备</i><i>概</i><i>览</i><i>（</i><i>在</i><i>线</i><i>设</i><i>备</i><i>）</i></div>
<div class="a" style="left:1073px;top:517px;font-size:14px;line-height:16px;color:#999"><i>地</i><i>区</i><i>分</i><i>布</i>Top10</div>
<div class="a" style="left:1193px;top:517px;font-size:14px;line-height:16px;color:#1890ff"><i>设</i><i>备</i><i>列</i><i>表</i></div>
<div class="a" style="left:1072px;top:552px;width:16px;height:16px;border-radius:8px;background:#6f94f6;color:#fff;font-size:11px;line-height:16px;text-align:center">1</div>
<div class="a" style="left:1098px;top:552px;font-size:13px;line-height:16px;color:#333"><i>广</i><i>东</i></div>
<div class="a" style="left:1149px;top:551px;width:100px;text-align:right;font-size:14px;line-height:16px;color:#555">407<i>台</i></div>
<div class="a" style="left:1072px;top:578px;width:16px;height:16px;border-radius:8px;background:#e98fab;color:#fff;font-size:11px;line-height:16px;text-align:center">2</div>
<div class="a" style="left:1098px;top:578px;font-size:13px;line-height:16px;color:#333"><i>江</i><i>西</i></div>
<div class="a" style="left:1149px;top:577px;width:100px;text-align:right;font-size:14px;line-height:16px;color:#555">207<i>台</i></div>
<div class="a" style="left:1072px;top:604px;width:16px;height:16px;border-radius:8px;background:#f2c38f;color:#fff;font-size:11px;line-height:16px;text-align:center">3</div>
<div class="a" style="left:1098px;top:604px;font-size:13px;line-height:16px;color:#333"><i>湖</i><i>南</i></div>
<div class="a" style="left:1149px;top:603px;width:100px;text-align:right;font-size:14px;line-height:16px;color:#555">21<i>台</i></div>
<div class="a" style="left:1072px;top:630px;width:16px;height:16px;border-radius:8px;background:#9a9cf3;color:#fff;font-size:11px;line-height:16px;text-align:center">4</div>
<div class="a" style="left:1098px;top:630px;font-size:13px;line-height:16px;color:#333"><i>浙</i><i>江</i></div>
<div class="a" style="left:1149px;top:629px;width:100px;text-align:right;font-size:14px;line-height:16px;color:#555">17<i>台</i></div>
<div class="a" style="left:1072px;top:656px;width:16px;height:16px;border-radius:8px;background:#e39fe2;color:#fff;font-size:11px;line-height:16px;text-align:center">5</div>
<div class="a" style="left:1098px;top:656px;font-size:13px;line-height:16px;color:#333"><i>其</i><i>他</i></div>
<div class="a" style="left:1149px;top:655px;width:100px;text-align:right;font-size:14px;line-height:16px;color:#555">17<i>台</i></div>
<div class="a" style="left:1072px;top:682px;width:16px;height:16px;border-radius:8px;background:#93d49b;color:#fff;font-size:11px;line-height:16px;text-align:center">6</div>
<div class="a" style="left:1098px;top:682px;font-size:13px;line-height:16px;color:#333"><i>北</i><i>京</i></div>
<div class="a" style="left:1149px;top:681px;width:100px;text-align:right;font-size:14px;line-height:16px;color:#555">13<i>台</i></div>
<div class="a" style="left:1072px;top:708px;width:16px;height:16px;border-radius:8px;background:#8fd8c8;color:#fff;font-size:11px;line-height:16px;text-align:center">7</div>
<div class="a" style="left:1098px;top:708px;font-size:13px;line-height:16px;color:#333"><i>江</i><i>苏</i></div>
<div class="a" style="left:1149px;top:707px;width:100px;text-align:right;font-size:14px;line-height:16px;color:#555">12<i>台</i></div>
<div class="a" style="left:1072px;top:734px;width:16px;height:16px;border-radius:8px;background:#b89ded;color:#fff;font-size:11px;line-height:16px;text-align:center">8</div>
<div class="a" style="left:1098px;top:734px;font-size:13px;line-height:16px;color:#333"><i>重</i><i>庆</i></div>
<div class="a" style="left:1149px;top:733px;width:100px;text-align:right;font-size:14px;line-height:16px;color:#555">6<i>台</i></div>
<div class="a" style="left:1072px;top:760px;width:16px;height:16px;border-radius:8px;background:#ee9a9a;color:#fff;font-size:11px;line-height:16px;text-align:center">9</div>
<div class="a" style="left:1098px;top:760px;font-size:13px;line-height:16px;color:#333"><i>安</i><i>徽</i></div>
<div class="a" style="left:1149px;top:759px;width:100px;text-align:right;font-size:14px;line-height:16px;color:#555">6<i>台</i></div>
<div class="a" style="left:1072px;top:786px;width:16px;height:16px;border-radius:8px;background:#f2c38f;color:#fff;font-size:10px;line-height:16px;text-align:center">10</div>
<div class="a" style="left:1098px;top:786px;font-size:13px;line-height:16px;color:#333"><i>河</i><i>南</i></div>
<div class="a" style="left:1149px;top:785px;width:100px;text-align:right;font-size:14px;line-height:16px;color:#555">4<i>台</i></div>
<svg class="a" style="left:430px;top:530px" width="330" height="260" viewBox="430 530 330 260">
<path d="M444.4 641.0 L445.2 638.5 L447.7 636.9 L448.9 634.7 L449.9 632.2 L452.6 630.9 L455.5 630.4 L458.3 629.5 L461.3 628.9 L464.0 627.8 L466.9 626.9 L469.0 624.5 L471.6 623.1 L474.9 623.1 L477.3 621.2 L477.3 618.7 L478.1 616.2 L476.9 613.6 L477.8 611.2 L478.5 608.7 L477.8 606.2 L478.4 603.7 L481.2 603.3 L483.6 602.2 L485.5 599.6 L488.3 599.3 L488.4 596.4 L490.1 594.0 L491.7 591.6 L491.6 588.6 L492.7 586.0 L495.7 585.5 L498.7 585.9 L501.7 585.2 L504.7 586.0 L504.8 582.7 L505.8 579.5 L507.9 578.0 L510.2 576.7 L512.1 575.0 L514.6 574.0 L517.2 574.9 L519.6 576.1 L521.8 577.8 L524.3 578.8 L526.9 579.7 L528.9 581.7 L528.8 584.3 L529.7 586.7 L530.1 589.3 L531.3 591.7 L530.4 594.4 L531.1 596.9 L532.2 599.3 L535.1 599.4 L537.6 600.6 L540.1 602.0 L542.7 602.8 L545.3 604.0 L548.2 603.9 L550.8 604.8 L552.1 607.6 L554.1 609.8 L556.4 611.8 L557.7 614.5 L559.6 616.8 L562.6 617.8 L565.6 618.0 L568.7 617.6 L571.7 617.9 L574.3 618.7 L577.1 618.3 L579.7 619.3 L582.0 620.9 L584.8 620.9 L587.5 621.1 L590.0 622.3 L593.0 622.7 L595.9 623.3 L598.9 623.5 L601.9 623.5 L604.5 622.6 L607.1 622.0 L609.8 621.4 L612.5 621.1 L615.0 619.9 L617.6 619.0 L620.2 618.4 L622.6 616.9 L625.3 616.2 L628.1 616.3 L630.0 614.1 L632.0 612.0 L633.0 609.2 L634.3 606.7 L635.6 604.1 L637.7 602.0 L640.4 601.3 L643.3 601.3 L645.9 600.2 L648.4 599.1 L651.3 598.9 L653.6 597.0 L656.4 596.8 L659.1 596.0 L661.8 595.8 L664.0 594.1 L666.3 592.9 L668.5 591.6 L671.1 591.1 L673.5 590.0 L676.4 588.2 L678.2 585.3 L675.5 585.7 L673.2 583.9 L670.7 583.4 L668.2 582.8 L665.7 582.6 L663.1 582.1 L660.5 582.1 L658.0 581.7 L659.0 578.8 L659.6 575.7 L659.9 572.5 L661.5 569.8 L663.7 568.4 L665.1 566.2 L666.3 563.9 L668.5 562.4 L670.2 560.6 L671.7 558.6 L673.5 556.7 L675.4 555.1 L677.3 553.3 L679.0 551.5 L680.6 549.5 L683.0 547.9 L684.9 545.7 L687.8 544.8 L690.6 544.3 L693.5 544.2 L696.3 545.0 L699.2 545.4 L702.0 544.8 L703.4 547.5 L705.2 549.9 L706.9 552.3 L709.2 554.3 L711.0 556.5 L711.5 559.4 L713.1 561.6 L715.4 563.5 L717.0 565.8 L717.6 568.6 L720.5 569.0 L722.5 571.4 L725.5 571.8 L728.2 572.8 L730.3 574.8 L733.0 575.8 L735.7 576.0 L738.5 575.9 L741.2 576.5 L743.7 577.6 L746.5 577.4 L749.2 578.0 L751.8 579.2 L754.5 579.3 L753.6 581.9 L752.8 584.6 L751.6 587.1 L751.4 589.9 L749.8 592.3 L748.6 594.8 L746.8 596.9 L745.2 599.3 L743.5 601.4 L740.5 602.5 L739.2 605.0 L737.7 607.4 L735.4 609.1 L733.3 610.9 L731.0 612.7 L730.1 615.7 L728.1 617.6 L725.9 619.5 L723.5 621.0 L720.9 621.8 L719.0 623.9 L716.2 624.3 L713.9 625.5 L711.6 626.9 L709.5 628.6 L706.5 628.6 L704.5 630.6 L701.8 632.0 L699.7 634.2 L697.6 636.4 L694.9 637.8 L692.4 638.7 L690.2 640.3 L687.7 641.2 L685.4 642.5 L686.3 638.8 L687.8 635.4 L686.2 632.9 L684.2 630.6 L682.5 632.8 L680.0 634.1 L677.1 634.7 L675.0 636.4 L673.4 638.8 L671.0 640.1 L669.2 642.9 L668.7 646.1 L671.2 646.7 L673.2 648.6 L675.7 649.2 L678.2 649.7 L680.6 650.4 L683.1 650.9 L685.6 651.3 L687.5 653.5 L690.4 652.9 L692.5 654.5 L690.3 655.9 L688.4 657.5 L687.1 659.7 L685.4 661.6 L683.4 663.8 L680.3 664.4 L677.8 665.9 L675.7 668.0 L673.5 670.0 L675.3 672.2 L677.2 674.2 L679.1 676.4 L681.0 678.4 L682.2 681.1 L684.2 683.1 L685.5 685.4 L687.1 687.6 L688.4 689.9 L689.0 692.6 L689.0 695.6 L689.9 698.5 L689.8 701.5 L690.1 704.5 L689.6 707.4 L687.9 709.9 L687.1 712.7 L687.8 715.9 L686.7 718.6 L685.4 721.2 L683.8 723.8 L681.1 725.5 L679.6 728.1 L678.2 730.8 L676.0 732.6 L673.7 734.4 L670.9 735.3 L668.3 736.6 L665.9 738.1 L663.9 740.3 L664.2 743.8 L663.9 747.4 L661.3 747.5 L659.0 748.7 L656.8 749.8 L654.1 749.8 L652.1 751.9 L649.6 752.2 L647.1 752.8 L645.1 754.8 L642.7 755.6 L639.8 755.4 L637.7 757.0 L635.6 759.0 L632.6 759.7 L630.5 761.7 L629.7 765.3 L629.3 768.9 L628.7 765.7 L627.0 763.0 L624.4 762.6 L621.8 762.1 L619.2 761.6 L616.8 760.0 L614.1 759.8 L611.5 759.4 L610.0 757.2 L607.9 755.7 L605.1 755.1 L603.6 752.9 L601.1 752.0 L599.5 749.8 L596.8 749.3 L594.4 748.1 L592.7 745.6 L590.0 745.0 L588.9 747.4 L588.3 750.0 L588.6 752.7 L587.5 755.1 L586.6 757.6 L586.8 760.3 L586.0 762.8 L583.5 760.9 L580.6 759.5 L578.3 757.3 L576.1 755.6 L574.8 753.2 L574.2 750.3 L572.1 748.5 L571.1 745.9 L568.8 744.2 L567.3 742.0 L567.1 739.3 L568.3 736.8 L568.5 734.1 L567.3 731.4 L568.7 728.8 L567.9 726.1 L568.1 723.5 L569.8 720.9 L568.5 718.2 L569.5 715.6 L567.0 716.4 L564.2 715.5 L561.8 716.8 L559.3 717.8 L556.8 718.0 L554.1 717.8 L551.9 719.2 L549.3 719.3 L547.3 721.3 L544.5 720.9 L542.5 722.7 L539.7 722.7 L537.7 724.4 L535.3 723.1 L532.5 723.6 L529.9 723.1 L527.4 722.2 L524.7 722.3 L522.3 721.0 L519.6 719.8 L516.5 720.0 L513.8 719.1 L511.6 716.6 L508.4 716.8 L505.8 715.6 L503.7 714.1 L501.4 713.0 L499.1 711.9 L496.6 711.0 L495.2 708.4 L493.1 707.0 L490.9 705.6 L487.9 705.6 L485.8 704.2 L483.9 702.4 L482.0 700.4 L480.4 698.0 L477.8 696.7 L476.0 694.7 L473.9 692.8 L471.3 691.5 L469.6 689.3 L469.9 686.7 L469.6 684.1 L469.7 681.6 L469.6 679.0 L470.1 676.4 L470.7 673.9 L469.0 671.7 L466.3 671.0 L464.3 669.2 L462.1 667.8 L460.2 665.8 L457.6 665.0 L455.7 662.9 L453.8 660.9 L452.1 658.7 L450.3 656.5 L448.8 654.1 L448.5 651.3 L447.7 648.6 L445.8 646.4 L445.0 643.7Z" fill="#eeeeee" stroke="#7d7d7d" stroke-width="0.9" stroke-linejoin="round"/>
<path d="M477.3 667.3 L480.1 667.4 L482.7 666.8 L484.9 664.5 L487.5 663.9 L490.4 664.6 L492.9 663.7 L495.5 663.0 L498.0 662.0 L500.6 661.5 L503.3 661.9 L505.9 661.7 L508.5 661.5 L511.1 660.6 L513.7 660.9 L516.4 660.7 L519.0 660.7 L521.6 661.1 L524.3 661.6 L526.9 661.5 L529.6 660.8 L532.2 660.7" fill="none" stroke="#858585" stroke-width="0.8"/>
<path d="M527.8 647.5 L530.8 646.9 L533.4 645.6 L535.4 642.9 L538.0 641.6 L541.0 641.0 L542.0 638.5 L542.3 635.8 L542.6 633.1 L542.4 630.4 L543.2 627.8 L545.6 626.4 L548.0 624.8 L550.3 623.2 L552.2 621.0 L554.8 619.8 L557.2 618.2 L559.6 616.8" fill="none" stroke="#858585" stroke-width="0.8"/>
<path d="M559.6 616.8 L560.2 619.4 L561.5 621.7 L564.1 623.1 L565.4 625.4 L566.0 628.0 L568.0 629.8 L570.3 630.9 L572.6 632.0 L575.0 633.0 L577.6 633.3 L580.0 634.5 L582.5 635.2 L585.0 635.8 L587.7 635.7 L590.0 637.0 L592.5 637.4 L595.0 637.8 L597.4 638.9 L599.8 639.9 L602.3 640.3 L605.0 640.0 L607.5 639.4 L610.0 638.6 L612.4 637.6 L614.8 636.5 L617.3 635.8 L620.0 636.0 L622.4 635.1 L624.7 634.0 L627.2 633.2 L629.9 633.2 L632.2 631.8 L634.6 631.0 L637.0 630.0 L639.0 628.4 L641.0 626.8 L643.4 626.1 L645.5 624.6 L648.0 624.0" fill="none" stroke="#858585" stroke-width="0.8"/>
<path d="M569.5 715.6 L569.7 712.8 L569.1 710.2 L567.0 708.0 L566.4 705.4 L567.2 702.5 L566.0 700.0 L565.4 697.0 L564.2 694.2 L562.9 691.4" fill="none" stroke="#858585" stroke-width="0.8"/>
<path d="M591.5 656.3 L594.5 656.7 L597.3 656.2 L600.0 655.0 L602.0 657.1 L603.2 659.7 L603.2 662.8 L605.0 665.0 L604.4 667.5 L604.4 670.0 L604.8 672.5 L604.1 675.0 L604.0 677.5 L604.0 680.0 L602.9 682.4 L602.6 685.2 L601.1 687.5 L600.0 690.0 L601.5 692.3 L602.3 695.0 L603.2 697.7 L604.7 700.1 L606.7 702.1" fill="none" stroke="#858585" stroke-width="0.8"/>
<path d="M604.0 668.0 L606.5 667.2 L608.5 665.6 L609.5 662.9 L612.0 662.0 L614.7 662.0 L616.8 664.1 L619.4 664.7 L622.0 665.0 L624.2 663.6 L625.8 661.4 L628.0 660.0 L628.8 662.5 L629.8 665.0 L630.8 667.4 L632.5 669.6 L632.9 672.3" fill="none" stroke="#858585" stroke-width="0.8"/>
<path d="M621.0 690.2 L622.8 687.9 L623.8 685.4 L623.3 682.3 L625.0 680.0 L626.8 678.0 L629.8 677.8 L631.7 675.9" fill="none" stroke="#858585" stroke-width="0.8"/>
<path d="M612.0 662.0 L613.5 659.2 L614.3 656.2 L613.5 652.8 L615.0 650.0 L615.6 647.2 L618.0 645.3 L619.1 642.7 L620.0 640.0" fill="none" stroke="#858585" stroke-width="0.8"/>
<path d="M628.0 660.0 L630.1 658.0 L631.5 655.6 L631.5 652.4 L633.0 650.0 L635.0 648.0 L637.5 647.2 L639.7 645.7 L641.9 644.3 L643.8 642.4 L646.3 641.5 L648.4 640.0" fill="none" stroke="#858585" stroke-width="0.8"/>
<path d="M599.5 749.8 L600.4 746.9 L600.5 743.9 L599.0 740.9 L599.2 737.9 L600.0 735.0 L601.4 732.6 L602.0 730.0 L602.7 727.4 L602.8 724.6 L604.1 722.2 L604.9 719.6 L605.7 717.1 L605.7 714.3 L607.0 711.8 L607.9 709.3" fill="none" stroke="#858585" stroke-width="0.8"/>
<path d="M600.0 735.0 L602.6 735.5 L605.1 735.1 L607.4 733.2 L609.9 732.9 L612.6 733.9 L615.0 733.0 L616.9 730.9 L618.3 728.4 L619.3 725.7 L621.3 723.6 L622.9 721.2 L624.4 718.9 L625.8 716.4" fill="none" stroke="#858585" stroke-width="0.8"/>
<path d="M611.5 759.4 L613.3 757.3 L614.4 754.9 L614.0 751.9 L615.2 749.5 L617.5 747.6 L618.0 745.0 L620.9 744.8 L623.7 744.1 L626.3 742.9 L629.2 742.8 L632.0 742.0 L635.0 740.1 L637.7 737.9" fill="none" stroke="#858585" stroke-width="0.8"/>
<path d="M663.9 740.3 L662.2 742.4 L661.2 744.8 L661.7 747.9 L660.0 750.0 L657.5 751.8 L654.4 752.2" fill="none" stroke="#858585" stroke-width="0.8"/>
<path d="M687.8 544.8 L687.4 547.5 L687.7 550.0 L689.7 552.3 L690.0 554.8 L689.0 557.6 L690.0 560.0 L691.7 561.9 L693.8 563.4 L696.2 564.5 L697.9 566.5 L700.0 568.0 L700.4 570.5 L701.0 572.9 L702.3 575.2 L702.3 577.8 L703.0 580.2 L702.9 582.8 L703.0 585.3 L703.7 587.7 L705.0 590.0 L707.1 591.4 L709.4 592.6 L711.7 593.6 L714.1 594.6 L716.3 595.9 L718.0 598.0 L720.5 597.6 L723.0 597.0 L725.5 596.8 L728.1 597.4 L730.5 596.4 L733.0 596.0 L735.6 595.9 L738.2 595.1 L740.7 594.5 L743.4 594.9 L745.9 594.3 L748.6 594.8" fill="none" stroke="#858585" stroke-width="0.8"/>
<path d="M694.9 637.8 L696.9 636.0 L698.1 633.7 L698.0 630.7 L699.3 628.5 L701.7 627.0 L702.8 624.7 L704.0 622.4 L705.0 620.0 L707.0 618.4 L709.4 617.5 L711.6 616.2 L713.7 614.8 L715.5 612.8 L718.0 612.0 L720.5 611.5 L722.9 611.0 L725.5 611.2 L728.1 611.2 L730.6 610.7 L732.9 609.6 L735.4 609.1" fill="none" stroke="#858585" stroke-width="0.8"/>
<path d="M705.0 590.0 L703.4 592.2 L702.6 594.7 L703.3 597.8 L702.4 600.2 L700.3 602.3 L700.0 605.0 L700.4 607.6 L701.4 610.1 L702.8 612.4 L703.2 615.1 L704.0 617.6 L705.0 620.0" fill="none" stroke="#858585" stroke-width="0.8"/>
<path d="M669.9 646.0 L670.7 648.7 L672.3 651.0 L675.1 652.3 L676.0 655.0 L678.7 655.0 L680.8 657.1 L683.4 657.7 L686.0 658.0" fill="none" stroke="#858585" stroke-width="0.8"/>
<path d="M685.4 721.2 L682.5 721.2 L679.8 721.9 L677.6 724.2 L674.9 725.0 L672.0 725.0 L669.5 722.6 L666.3 721.2" fill="none" stroke="#858585" stroke-width="0.8"/>
<path d="M527.8 647.5 L530.2 645.8 L533.3 645.9 L535.9 644.7 L538.2 642.8 L541.0 642.1 L543.7 642.9 L546.3 643.6 L548.9 644.7 L551.5 645.7 L554.5 645.3 L557.2 645.9 L559.6 647.5 L562.5 646.2 L564.7 643.8 L567.3 642.1 L569.8 643.2 L572.8 642.6 L575.2 644.0 L577.8 645.1 L580.5 645.4 L582.7 646.9 L583.6 649.6 L585.5 651.4 L588.4 652.1 L590.3 653.9 L591.5 656.3 L591.1 658.8 L590.1 661.2 L590.8 663.9 L590.7 666.4 L590.1 668.9 L590.5 671.5 L589.3 673.9 L593.6 676.1 L591.7 678.2 L589.3 679.7 L587.1 681.4 L585.2 683.5 L582.7 684.9 L580.2 683.0 L577.9 680.9 L576.0 678.4 L573.9 676.1 L570.7 677.6 L567.3 678.3 L567.2 681.2 L565.0 683.3 L564.6 686.1 L563.5 688.7 L562.9 691.4 L559.8 691.2 L557.2 689.1 L554.1 689.3 L551.9 687.9 L549.1 688.3 L546.8 687.2 L544.7 685.7 L542.3 684.9 L540.0 683.8 L537.3 683.8 L535.2 682.3 L532.7 681.8 L530.1 681.6 L527.8 680.5 L527.4 677.9 L527.4 675.2 L526.8 672.7 L525.6 670.2 L525.2 667.6 L524.5 665.1 L526.7 662.9 L529.4 661.8 L532.2 660.7 L531.8 657.9 L530.3 655.5 L529.0 653.0 L528.8 650.1Z" fill="#e1e8f0" stroke="#7a7a7a" stroke-width="0.7" stroke-linejoin="round"/>
<path d="M649.6 623.5 L652.4 622.0 L655.7 622.3 L658.7 621.3 L661.5 619.9 L664.1 621.0 L666.3 622.8 L668.7 624.2 L671.0 625.8 L671.2 629.0 L671.4 632.3 L672.3 635.4 L671.1 638.2 L668.7 640.1 L669.5 643.1 L668.7 646.1 L666.3 647.8 L665.0 650.5 L662.6 652.2 L661.7 655.3 L659.1 656.8 L656.8 659.3 L654.4 661.6 L651.5 660.6 L648.4 660.4 L648.1 657.8 L649.6 655.3 L649.7 652.7 L648.4 650.0 L648.5 647.4 L649.6 644.9 L649.7 642.0 L650.4 639.2 L649.4 636.3 L649.1 633.5 L649.6 630.6 L649.5 627.0Z" fill="#e2e8f1" stroke="#7a7a7a" stroke-width="0.7" stroke-linejoin="round"/>
<path d="M632.9 672.3 L634.5 670.2 L637.4 669.7 L639.3 668.1 L640.8 665.8 L643.1 664.7 L645.1 663.1 L647.2 661.6 L650.3 662.7 L653.5 663.7 L656.8 664.0 L658.4 666.1 L659.5 668.4 L659.1 671.4 L660.7 673.5 L661.5 675.9 L659.2 678.0 L658.3 681.3 L655.6 683.1 L656.1 686.3 L656.0 689.5 L656.8 692.6 L653.8 693.1 L650.8 692.6 L648.6 690.5 L645.9 689.1 L642.5 689.0 L639.9 687.6 L637.7 685.4 L636.3 683.0 L635.4 680.2 L633.0 678.4 L631.7 675.9Z" fill="#f2c98e" stroke="#7a7a7a" stroke-width="0.7" stroke-linejoin="round"/>
<path d="M661.5 671.1 L664.4 670.2 L667.6 671.2 L670.5 670.7 L673.5 670.0 L675.6 671.9 L677.1 674.4 L678.9 676.5 L680.4 678.9 L682.0 681.2 L684.2 683.1 L686.1 685.1 L687.4 687.5 L687.3 690.5 L689.0 692.6 L687.3 695.1 L685.4 697.4 L682.3 696.1 L678.8 696.7 L675.8 695.0 L674.5 692.6 L673.8 690.0 L671.8 688.0 L671.0 685.4 L669.7 682.9 L667.7 681.1 L664.7 680.3 L662.8 678.4 L661.5 675.9Z" fill="#8dd6c3" stroke="#7a7a7a" stroke-width="0.7" stroke-linejoin="round"/>
<path d="M655.6 678.3 L658.1 676.5 L661.4 676.5 L663.9 674.7 L665.2 677.1 L667.6 678.7 L668.9 681.1 L670.7 683.2 L672.3 685.4 L672.9 687.9 L673.6 690.4 L675.6 692.3 L675.8 695.0 L676.2 698.3 L674.4 701.3 L674.6 704.5 L672.3 705.8 L669.9 706.9 L666.8 706.0 L663.4 707.0 L660.3 705.7 L659.5 703.1 L659.3 700.4 L657.7 698.0 L658.3 695.0 L656.8 692.6 L657.3 689.7 L655.5 687.0 L655.2 684.1 L655.9 681.2Z" fill="#ee9a9a" stroke="#7a7a7a" stroke-width="0.7" stroke-linejoin="round"/>
<path d="M671.0 706.9 L672.3 704.1 L675.1 702.5 L676.8 700.1 L678.2 697.4 L681.5 697.8 L684.6 699.0 L687.8 699.8 L689.0 703.3 L690.1 706.9 L689.1 709.2 L688.0 711.5 L688.4 714.3 L687.8 716.7 L685.6 718.6 L685.4 721.2 L681.8 721.3 L678.2 721.2 L676.6 718.5 L673.6 717.0 L672.3 714.0 L671.6 710.5Z" fill="#e7a0df" stroke="#7a7a7a" stroke-width="0.7" stroke-linejoin="round"/>
<path d="M649.6 709.3 L652.1 707.8 L655.1 708.1 L657.8 707.1 L660.3 705.7 L663.6 705.7 L666.7 706.5 L669.9 706.9 L671.2 710.4 L672.3 714.0 L670.1 716.2 L667.9 718.5 L666.3 721.2 L665.8 723.9 L664.7 726.4 L662.2 728.1 L661.5 730.8 L660.8 734.0 L659.4 737.0 L659.1 740.3 L656.2 740.8 L653.6 739.6 L650.8 739.1 L650.6 736.3 L649.1 733.9 L649.8 730.9 L648.4 728.4 L649.5 725.3 L648.4 721.9 L649.6 718.8 L648.7 715.6 L649.7 712.5Z" fill="#eb8fad" stroke="#7a7a7a" stroke-width="0.7" stroke-linejoin="round"/>
<path d="M625.8 706.9 L628.8 705.5 L632.3 705.9 L635.3 704.5 L638.2 705.6 L641.3 705.3 L644.2 706.3 L647.2 706.9 L647.9 709.9 L648.1 712.9 L648.5 715.9 L649.6 718.8 L650.0 721.9 L649.8 724.9 L648.1 727.7 L648.4 730.8 L646.7 732.7 L644.5 734.0 L643.7 736.8 L641.3 737.9 L638.9 736.8 L636.5 735.5 L634.7 733.4 L632.0 732.3 L630.7 729.6 L628.1 728.4 L628.2 725.3 L626.1 722.6 L625.5 719.6 L625.8 716.4 L625.9 713.2 L626.6 710.1Z" fill="#f2c98e" stroke="#7a7a7a" stroke-width="0.7" stroke-linejoin="round"/>
<path d="M606.7 702.1 L608.7 700.1 L611.8 699.7 L614.1 698.1 L616.2 696.2 L617.5 693.9 L619.4 692.2 L621.0 690.2 L624.6 691.3 L628.1 692.6 L628.4 695.7 L629.3 698.6 L626.6 700.2 L625.0 703.1 L622.2 704.5 L623.6 708.0 L623.4 711.7 L620.8 711.9 L618.6 713.3 L616.2 714.0 L613.7 712.0 L610.2 711.6 L607.9 709.3 L607.2 705.7Z" fill="#ef9494" stroke="#7a7a7a" stroke-width="0.7" stroke-linejoin="round"/>
<path d="M637.7 737.9 L640.5 736.8 L643.5 737.6 L646.4 736.9 L649.1 735.5 L652.0 735.5 L654.4 736.7 L656.8 737.8 L659.0 739.3 L661.5 740.3 L662.2 742.9 L664.6 744.7 L665.1 747.4 L662.8 749.4 L659.5 749.2 L657.1 751.1 L654.4 752.2 L651.3 752.3 L648.6 754.3 L645.5 754.1 L642.5 754.6 L639.9 756.1 L638.0 758.5 L634.8 759.3 L632.9 761.7 L631.4 763.9 L632.1 766.8 L630.5 768.9 L628.1 767.7 L627.9 764.8 L629.4 762.4 L630.7 759.8 L630.5 757.0 L631.8 754.5 L633.1 751.9 L634.9 749.7 L636.5 747.4 L636.1 744.1 L636.8 741.0Z" fill="#6896fa" stroke="#7a7a7a" stroke-width="0.7" stroke-linejoin="round"/>
<path d="M658 631 C660 628 664 628 665 631 C666 635 662 637 659 636Z" fill="#7ac27c" stroke="#6a6a6a" stroke-width="0.6"/>
<ellipse cx="628.1" cy="777.2" rx="6" ry="5.5" fill="#eee" stroke="#8a8a8a" stroke-width="0.7"/>
<ellipse cx="685.4" cy="746.2" rx="3.5" ry="10" fill="#eee" stroke="#8a8a8a" stroke-width="0.7" transform="rotate(18 685.4 746.2)"/>
<rect x="710.4" y="737.4" width="31" height="44.6" fill="#fff" stroke="#666" stroke-width="0.9"/>
<path d="M711 741 C720 744 730 742 741 739" stroke="#999" stroke-width="0.7" fill="#eee"/>
<path d="M737 742 C736 750 734 760 731 768 C729 773 725 777 721 779 M716 746 C716 755 715 765 714 772" stroke="#555" stroke-width="0.8" stroke-dasharray="3 3" fill="none"/>
<rect x="716" y="744" width="3" height="3" fill="none" stroke="#777" stroke-width="0.6"/>
<circle cx="697" cy="729" r="0.7" fill="#888"/><circle cx="702" cy="727" r="0.7" fill="#888"/><circle cx="663" cy="765" r="0.7" fill="#888"/>
</svg>
<div class="a" style="left:232px;top:858px;width:1147px;height:174px;background:#fff"></div>
<div class="a" style="left:256px;top:877px;font-size:16px;line-height:18px;color:#222;-webkit-text-stroke:0.35px #222"><i>服</i><i>务</i><i>与</i><i>功</i><i>能</i></div>
<div class="a" style="left:232px;top:912px;width:1147px;height:1px;background:#e8e8e8"></div>
<div class="a" style="left:256px;top:937px;width:1099px;height:55px;background:#fafafa;border-bottom:1px solid #e8e8e8;border-radius:4px 4px 0 0"></div>
<div class="a" style="left:272px;top:956px;font-size:14px;line-height:16px;color:#222;font-weight:bold"><i>服</i><i>务</i></div>
<div class="a" style="left:629px;top:956px;font-size:14px;line-height:16px;color:#222;font-weight:bold"><i>状</i><i>态</i></div>
<div class="a" style="left:843px;top:956px;font-size:14px;line-height:16px;color:#222;font-weight:bold"><i>相</i><i>关</i><i>文</i><i>档</i></div>
<div class="a" style="left:1199px;top:956px;font-size:14px;line-height:16px;color:#222;font-weight:bold"><i>操</i><i>作</i></div>
<div class="a" style="left:272px;top:1010px;font-size:14px;line-height:16px;color:#555"><i>视</i><i>频</i><i>监</i><i>控</i></div>
<div class="a" style="left:629px;top:1010px;font-size:14px;line-height:16px;color:#555"><i>已</i><i>开</i><i>通</i></div>
<div class="a" style="left:843px;top:1010px;font-size:14px;line-height:16px;color:#555"><i>介</i><i>绍</i><i>文</i><i>档</i></div>
<div class="a" style="left:953px;top:1010px;font-size:14px;line-height:16px;color:#555"><i>使</i><i>用</i><i>指</i><i>南</i></div>
<div class="a" style="left:1199px;top:1010px;font-size:14px;line-height:16px;color:#1890ff"><i>查</i><i>看</i><i>详</i><i>情</i></div>
<svg class="a" style="left:1403px;top:307px" width="491" height="151" viewBox="1403 307 491 151">
<defs>
<radialGradient id="ball" cx="0.4" cy="0.35" r="0.7"><stop offset="0" stop-color="#ffffff"/><stop offset="1" stop-color="#d9deea"/></radialGradient>
<radialGradient id="coin" cx="0.45" cy="0.4" r="0.6"><stop offset="0" stop-color="#ffd2a0"/><stop offset="1" stop-color="#ffb36a"/></radialGradient>
</defs>
<rect x="1403" y="307" width="491" height="151" fill="#e0e9fd"/>
<path d="M1405 425 C1440 412 1480 400 1520 405 C1580 410 1640 440 1700 456 C1760 470 1840 440 1893 420" stroke="#c3d3f6" stroke-width="1.5" stroke-dasharray="6 5" fill="none"/>
<path d="M1858 307 C1870 311 1882 316 1893 323" stroke="#c3d3f6" stroke-width="1.5" stroke-dasharray="6 5" fill="none"/>
<path d="M1435 333 L1448 342 L1435 351Z" stroke="#c3d3f6" stroke-width="1.5" fill="none" stroke-linejoin="round"/>
<circle cx="1642.5" cy="396" r="5.5" stroke="#c3d3f6" stroke-width="1.5" fill="none"/>
<path d="M1871 349 V363 M1864 356 H1878" stroke="#c3d3f6" stroke-width="1.5" transform="rotate(-30 1871 356)"/>
<path d="M1457 412 L1480 404 L1504 412 L1504 458 L1457 458Z" fill="#b3c8fb"/>
<path d="M1480 420 L1504 412 L1504 458 L1480 458Z" fill="#a5bdf7"/>
<path d="M1457 412 L1480 404 L1504 412 L1480 420Z" fill="#bccffb"/>
<circle cx="1480.5" cy="393" r="12.5" fill="url(#ball)"/>
<path d="M1517 378 L1545 369 L1573 378 L1573 458 L1517 458Z" fill="#b3c8fb"/>
<path d="M1545 387 L1573 378 L1573 458 L1545 458Z" fill="#a5bdf7"/>
<path d="M1517 378 L1545 369 L1573 378 L1545 387Z" fill="#c4d5fc"/>
<ellipse cx="1545" cy="378" rx="13" ry="4" fill="#a6bdf7" opacity="0.45"/>
<ellipse cx="1481" cy="413" rx="10" ry="3" fill="#a6bdf7" opacity="0.4"/>
<g transform="translate(-2 0) rotate(-38 1546 347)">
<ellipse cx="1547.5" cy="349" rx="23" ry="19" fill="#ffae68"/>
<ellipse cx="1546" cy="347" rx="23" ry="19" fill="#ffcd98"/>
<ellipse cx="1546" cy="347" rx="13.5" ry="12" fill="#ffc890" stroke="#ffad66" stroke-width="2.6"/>
</g>
<path transform="translate(-2 0)" d="M1541 338 L1544.5 344 M1551 337 L1544.5 344 L1543 352 M1539 346 L1549 344.5 M1539 349.5 L1548.5 348" stroke="#fff" stroke-width="1.4" fill="none" stroke-linecap="round"/>
<path d="M1586 437 L1609 430 L1633 437 L1633 458 L1586 458Z" fill="#b3c8fb"/>
<path d="M1609 444 L1633 437 L1633 458 L1609 458Z" fill="#a5bdf7"/>
<path d="M1586 437 L1609 430 L1633 437 L1609 444Z" fill="#c4d5fc"/>
</svg>
<div class="a" style="left:1700px;top:358px;width:140px;height:50px;background:#1890ff;border-radius:3px;color:#fff;font-size:22px;line-height:50px;text-align:center"><i>立</i><i>即</i><i>充</i><i>值</i></div>
<div class="a" style="left:1403px;top:482px;width:491px;height:550px;background:#fff"></div>
<div class="a" style="left:1426px;top:502px;font-size:16px;line-height:18px;color:#222;font-weight:bold"><i>消</i><i>费</i><i>情</i><i>况</i></div>
<div class="a" style="left:1793px;top:502px;font-size:14px;line-height:16px;color:#1890ff"><i>消</i><i>费</i><i>记</i><i>录</i></div>
<div class="a" style="left:1851px;top:503px;font-size:13px;line-height:16px;color:#1890ff;letter-spacing:2.5px">&gt;&gt;</div>
<div class="a" style="left:1403px;top:536px;width:491px;height:1px;background:#e8e8e8"></div>
<div class="a" style="left:1436px;top:581px;font-size:12px;line-height:14px;color:#999"><i>当</i><i>前</i><i>余</i><i>额</i></div>
<div class="a" style="left:1616px;top:581px;font-size:12px;line-height:14px;color:#999"><i>昨</i><i>日</i><i>消</i><i>费</i></div>
<div class="a" style="left:1792px;top:581px;font-size:12px;line-height:14px;color:#999"><i>昨</i><i>日</i><i>接</i><i>口</i><i>调</i><i>用</i></div>
<div class="a" style="left:1421px;top:607px;font-size:12px;line-height:14px;color:#222">¥</div>
<div class="a" style="left:1429px;top:599px;width:69px;height:28px;background:#1c8cfd"></div>
<div class="a" style="left:1430px;top:601px;font-size:22px;line-height:24px;color:#fff;letter-spacing:-0.2px">554.88</div>
<div class="a" style="left:1588px;top:607px;font-size:12px;line-height:14px;color:#222">¥</div>
<div class="a" style="left:1596px;top:601px;font-size:22px;line-height:24px;color:#111;letter-spacing:0px">72.57</div>
<div class="a" style="left:1656px;top:605px;width:36px;height:18px;border:1px solid #d4d4d4;color:#c0c0c0;font-size:12px;line-height:16px;text-align:center"><i>明</i><i>细</i></div>
<div class="a" style="left:1782px;top:601px;font-size:22px;line-height:24px;color:#111;letter-spacing:0px">67113</div>
<div class="a" style="left:1845px;top:608px;font-size:12px;line-height:14px;color:#333"><i>次</i></div>
<svg class="a" style="left:1868px;top:611px" width="8" height="5"><path d="M0 0 H8 L4 5Z" fill="#52c41a"/></svg>
<svg class="a" style="left:1403px;top:650px" width="491" height="170" viewBox="1403 650 491 170">
<line x1="1457" y1="673.0" x2="1876.3" y2="673.0" stroke="#efefef" stroke-width="1"/>
<line x1="1457" y1="701.9" x2="1876.3" y2="701.9" stroke="#efefef" stroke-width="1"/>
<line x1="1457" y1="730.8" x2="1876.3" y2="730.8" stroke="#efefef" stroke-width="1"/>
<line x1="1457" y1="759.7" x2="1876.3" y2="759.7" stroke="#efefef" stroke-width="1"/>
<polygon points="1457,788.6 1457.0,674.0 1526.9,673.9 1596.8,673.7 1666.7,673.4 1736.5,673.1 1806.4,683.7 1876.3,683.7 1876.3,788.6" fill="#d4e1fa"/>
<line x1="1457" y1="701.9" x2="1876.3" y2="701.9" stroke="#c9d6f0" stroke-width="1"/>
<line x1="1457" y1="730.8" x2="1876.3" y2="730.8" stroke="#c9d6f0" stroke-width="1"/>
<line x1="1457" y1="759.7" x2="1876.3" y2="759.7" stroke="#c9d6f0" stroke-width="1"/>
<line x1="1457" y1="788.6" x2="1876.3" y2="788.6" stroke="#c6d3ee" stroke-width="1"/>
<line x1="1457.0" y1="788.6" x2="1457.0" y2="792.6" stroke="#ddd" stroke-width="1"/>
<line x1="1526.9" y1="788.6" x2="1526.9" y2="792.6" stroke="#ddd" stroke-width="1"/>
<line x1="1596.8" y1="788.6" x2="1596.8" y2="792.6" stroke="#ddd" stroke-width="1"/>
<line x1="1666.7" y1="788.6" x2="1666.7" y2="792.6" stroke="#ddd" stroke-width="1"/>
<line x1="1736.5" y1="788.6" x2="1736.5" y2="792.6" stroke="#ddd" stroke-width="1"/>
<line x1="1806.4" y1="788.6" x2="1806.4" y2="792.6" stroke="#ddd" stroke-width="1"/>
<line x1="1876.3" y1="788.6" x2="1876.3" y2="792.6" stroke="#ddd" stroke-width="1"/>
<polyline points="1457.0,674.0 1526.9,673.9 1596.8,673.7 1666.7,673.4 1736.5,673.1 1806.4,683.7 1876.3,683.7" fill="none" stroke="#4d7ef6" stroke-width="2"/>
<text x="1450" y="677.0" font-size="12" fill="#8c8c8c" text-anchor="end" font-family="Liberation Sans">80元</text>
<text x="1450" y="705.9" font-size="12" fill="#8c8c8c" text-anchor="end" font-family="Liberation Sans">60元</text>
<text x="1450" y="734.8" font-size="12" fill="#8c8c8c" text-anchor="end" font-family="Liberation Sans">40元</text>
<text x="1450" y="763.7" font-size="12" fill="#8c8c8c" text-anchor="end" font-family="Liberation Sans">20元</text>
<text x="1450" y="792.6" font-size="12" fill="#8c8c8c" text-anchor="end" font-family="Liberation Sans">0元</text>
<text x="1457.0" y="808" font-size="12" fill="#8c8c8c" text-anchor="middle" font-family="Liberation Sans">2.24</text>
<text x="1526.9" y="808" font-size="12" fill="#8c8c8c" text-anchor="middle" font-family="Liberation Sans">2.25</text>
<text x="1596.8" y="808" font-size="12" fill="#8c8c8c" text-anchor="middle" font-family="Liberation Sans">2.26</text>
<text x="1666.7" y="808" font-size="12" fill="#8c8c8c" text-anchor="middle" font-family="Liberation Sans">2.27</text>
<text x="1736.5" y="808" font-size="12" fill="#8c8c8c" text-anchor="middle" font-family="Liberation Sans">2.28</text>
<text x="1806.4" y="808" font-size="12" fill="#8c8c8c" text-anchor="middle" font-family="Liberation Sans">3.1</text>
<text x="1876.3" y="808" font-size="12" fill="#8c8c8c" text-anchor="middle" font-family="Liberation Sans">3.2</text>
</svg>
<div class="a" style="left:1413px;top:837px;width:471px;height:37px;background:#fafafa;border-radius:4px 4px 0 0"></div>
<div class="a" style="left:1394px;top:848px;width:120px;text-align:center;font-size:14px;line-height:16px;color:#222;font-weight:bold"><i>日</i><i>期</i></div>
<div class="a" style="left:1487px;top:848px;width:120px;text-align:center;font-size:14px;line-height:16px;color:#222;font-weight:bold"><i>消</i><i>费</i></div>
<div class="a" style="left:1616px;top:848px;width:120px;text-align:center;font-size:14px;line-height:16px;color:#222;font-weight:bold"><i>额</i><i>外</i><i>消</i><i>费</i></div>
<div class="a" style="left:1759px;top:848px;width:120px;text-align:center;font-size:14px;line-height:16px;color:#222;font-weight:bold"><i>日</i><i>涨</i><i>幅</i></div>
<div class="a" style="left:1413px;top:874px;width:471px;height:1px;background:#e8e8e8"></div>
<div class="a" style="left:1394px;top:885px;width:120px;text-align:center;font-size:14px;line-height:16px;color:#555">3.2</div>
<div class="a" style="left:1487px;top:885px;width:120px;text-align:center;font-size:14px;line-height:16px;color:#555">72.57</div>
<div class="a" style="left:1616px;top:885px;width:120px;text-align:center;font-size:14px;line-height:16px;color:#555">43.54</div>
<div class="a" style="left:1759px;top:885px;width:120px;text-align:center;font-size:14px;line-height:16px;color:#555">0.00%</div>
<div class="a" style="left:1413px;top:912px;width:471px;height:1px;background:#e8e8e8"></div>
<div class="a" style="left:1394px;top:923px;width:120px;text-align:center;font-size:14px;line-height:16px;color:#555">3.1</div>
<div class="a" style="left:1487px;top:923px;width:120px;text-align:center;font-size:14px;line-height:16px;color:#555">72.57</div>
<div class="a" style="left:1616px;top:923px;width:120px;text-align:center;font-size:14px;line-height:16px;color:#555">43.54</div>
<div class="a" style="left:1759px;top:923px;width:120px;text-align:center;font-size:14px;line-height:16px;color:#555">-9.20%</div>
<div class="a" style="left:1413px;top:950px;width:471px;height:1px;background:#e8e8e8"></div>
<div class="a" style="left:1394px;top:961px;width:120px;text-align:center;font-size:14px;line-height:16px;color:#555">2.28</div>
<div class="a" style="left:1487px;top:961px;width:120px;text-align:center;font-size:14px;line-height:16px;color:#555">79.92</div>
<div class="a" style="left:1616px;top:961px;width:120px;text-align:center;font-size:14px;line-height:16px;color:#555">47.78</div>
<div class="a" style="left:1759px;top:961px;width:120px;text-align:center;font-size:14px;line-height:16px;color:#555">0.26%</div>
<div class="a" style="left:1413px;top:988px;width:471px;height:1px;background:#e8e8e8"></div>
<div class="a" style="left:1394px;top:999px;width:120px;text-align:center;font-size:14px;line-height:16px;color:#555">2.27</div>
<div class="a" style="left:1487px;top:999px;width:120px;text-align:center;font-size:14px;line-height:16px;color:#555">79.71</div>
<div class="a" style="left:1616px;top:999px;width:120px;text-align:center;font-size:14px;line-height:16px;color:#555">47.57</div>
<div class="a" style="left:1759px;top:999px;width:120px;text-align:center;font-size:14px;line-height:16px;color:#555">0.54%</div>
<div class="a" style="left:1413px;top:1026px;width:471px;height:1px;background:#e8e8e8"></div>
<div class="a" style="left:1638px;top:945px;font-size:20px;line-height:24px;color:rgba(0,0,0,0.3);letter-spacing:0.6px"><i>激</i><i>活</i> Windows</div>
<div class="a" style="left:1638px;top:972px;font-size:14px;line-height:16px;color:rgba(0,0,0,0.3);letter-spacing:0.8px;--ls:0.8px"><i>转</i><i>到</i>“<i>设</i><i>置</i>”<i>以</i><i>激</i><i>活</i> Windows<i>。</i></div>
<div class="a" style="left:8px;top:1032px;width:1920px;height:8px;background:#fff"></div>
<div class="a" style="left:0;top:1040px;width:1928px;height:8px;background:#1b3e5d"></div>
<div class="a" style="left:0;top:1040px;width:8px;height:8px;background:#06285e"></div>
<div class="a" style="left:447px;top:1040px;width:53px;height:8px;background:#1560a0"></div>
<div class="a" style="left:1545px;top:1040px;width:35px;height:8px;background:#35785a"></div>
<div class="a" style="left:500px;top:1040px;width:4px;height:8px;background:#164c80"></div>
<div class="a" style="left:1800px;top:1040px;width:80px;height:8px;overflow:hidden"><div style="position:absolute;left:24px;top:3px;font-size:12px;line-height:14px;color:#fff;white-space:nowrap">17:20</div></div>
<div class="a" style="left:1580px;top:1040px;width:13px;height:8px;background:#3d5a78"></div>
</body></html>
